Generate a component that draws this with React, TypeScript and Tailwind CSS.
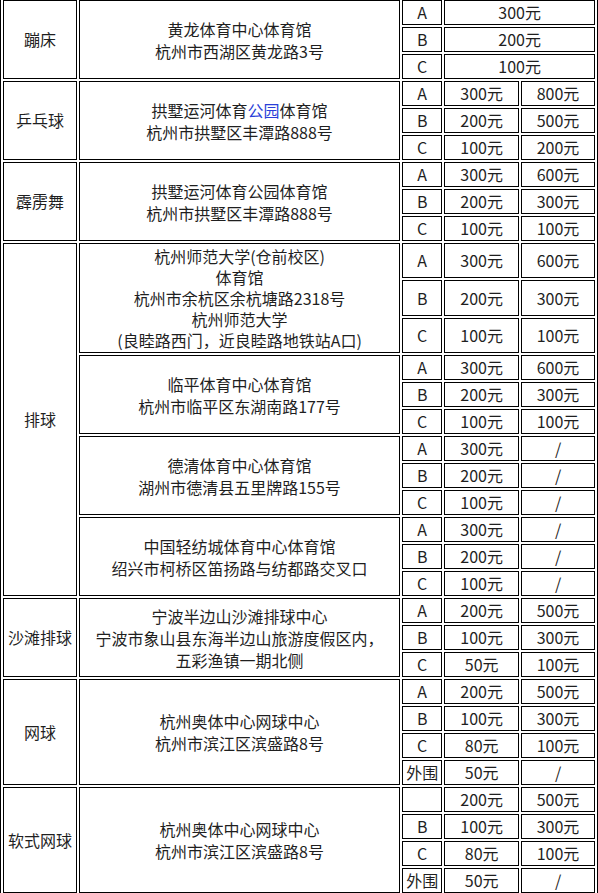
import React from 'react';

type PriceRow = {
  level: string;
  price: string;
  price2?: string;
  h?: string;
};

type Venue = {
  place: React.ReactNode;
  tight?: boolean;
  rows: PriceRow[];
};

type Sport = {
  name: string;
  venues: Venue[];
};

const abc = (a: [string, string?], b: [string, string?], c: [string, string?]): PriceRow[] => [
  { level: 'A', price: a[0], price2: a[1] },
  { level: 'B', price: b[0], price2: b[1] },
  { level: 'C', price: c[0], price2: c[1] },
];

const sports: Sport[] = [
  {
    name: '蹦床',
    venues: [
      {
        place: (
          <>
            黄龙体育中心体育馆
            <br />
            杭州市西湖区黄龙路3号
          </>
        ),
        rows: abc(['300元'], ['200元'], ['100元']),
      },
    ],
  },
  {
    name: '乒乓球',
    venues: [
      {
        place: (
          <>
            拱墅运河体育<span className="text-[#2a3fd8]">公园</span>体育馆
            <br />
            杭州市拱墅区丰潭路888号
          </>
        ),
        rows: abc(['300元', '800元'], ['200元', '500元'], ['100元', '200元']),
      },
    ],
  },
  {
    name: '霹雳舞',
    venues: [
      {
        place: (
          <>
            拱墅运河体育公园体育馆
            <br />
            杭州市拱墅区丰潭路888号
          </>
        ),
        rows: abc(['300元', '600元'], ['200元', '300元'], ['100元', '100元']),
      },
    ],
  },
  {
    name: '排球',
    venues: [
      {
        place: (
          <>
            杭州师范大学(仓前校区)
            <br />
            体育馆
            <br />
            杭州市余杭区余杭塘路2318号
            <br />
            杭州师范大学
            <br />
            (良睦路西门，近良睦路地铁站A口)
          </>
        ),
        tight: true,
        rows: [
          { level: 'A', price: '300元', price2: '600元', h: 'h-[35px]' },
          { level: 'B', price: '200元', price2: '300元', h: 'h-[36px]' },
          { level: 'C', price: '100元', price2: '100元', h: 'h-[35px]' },
        ],
      },
      {
        place: (
          <>
            临平体育中心体育馆
            <br />
            杭州市临平区东湖南路177号
          </>
        ),
        rows: abc(['300元', '600元'], ['200元', '300元'], ['100元', '100元']),
      },
      {
        place: (
          <>
            德清体育中心体育馆
            <br />
            湖州市德清县五里牌路155号
          </>
        ),
        rows: abc(['300元', '/'], ['200元', '/'], ['100元', '/']),
      },
      {
        place: (
          <>
            中国轻纺城体育中心体育馆
            <br />
            绍兴市柯桥区笛扬路与纺都路交叉口
          </>
        ),
        rows: abc(['300元', '/'], ['200元', '/'], ['100元', '/']),
      },
    ],
  },
  {
    name: '沙滩排球',
    venues: [
      {
        place: (
          <>
            宁波半边山沙滩排球中心
            <br />
            宁波市象山县东海半边山旅游度假区内，
            <br />
            五彩渔镇一期北侧
          </>
        ),
        rows: abc(['200元', '500元'], ['100元', '300元'], ['50元', '100元']),
      },
    ],
  },
  {
    name: '网球',
    venues: [
      {
        place: (
          <>
            杭州奥体中心网球中心
            <br />
            杭州市滨江区滨盛路8号
          </>
        ),
        rows: [
          ...abc(['200元', '500元'], ['100元', '300元'], ['80元', '100元']),
          { level: '外围', price: '50元', price2: '/' },
        ],
      },
    ],
  },
  {
    name: '软式网球',
    venues: [
      {
        place: (
          <>
            杭州奥体中心网球中心
            <br />
            杭州市滨江区滨盛路8号
          </>
        ),
        rows: [
          { level: '', price: '200元', price2: '500元' },
          { level: 'B', price: '100元', price2: '300元' },
          { level: 'C', price: '80元', price2: '100元' },
          { level: '外围', price: '50元', price2: '/' },
        ],
      },
    ],
  },
];

const cell = 'border border-black p-px text-center align-middle';

export default function App() {
  return (
    <div
      className="w-[598px] overflow-hidden bg-white text-[16px] leading-[21px] text-[#1f1f1f]"
      style={{ fontFamily: '"Microsoft YaHei", "Noto Sans CJK SC", "Noto Sans", sans-serif' }}
    >
      <table className="-mt-[3px] table-fixed border-separate border-spacing-[2px] border border-black">
        <colgroup>
          <col className="w-[74px]" />
          <col className="w-[322px]" />
          <col className="w-[40px]" />
          <col className="w-[75px]" />
          <col className="w-[74px]" />
        </colgroup>
        <tbody>
          {sports.map((sport) => {
            const total = sport.venues.reduce((n, v) => n + v.rows.length, 0);
            return sport.venues.map((venue, vi) =>
              venue.rows.map((row, ri) => (
                <tr key={`${sport.name}-${vi}-${ri}`} className={row.h ?? 'h-[25px]'}>
                  {vi === 0 && ri === 0 && (
                    <td rowSpan={total} className={cell}>
                      {sport.name}
                    </td>
                  )}
                  {ri === 0 && (
                    <td
                      rowSpan={venue.rows.length}
                      className={`${cell} ${venue.tight ? 'leading-[21px]' : 'leading-[22px]'}`}
                    >
                      {venue.place}
                    </td>
                  )}
                  <td className={cell}>{row.level}</td>
                  {row.price2 === undefined ? (
                    <td colSpan={2} className={cell}>
                      {row.price}
                    </td>
                  ) : (
                    <>
                      <td className={cell}>{row.price}</td>
                      <td className={cell}>{row.price2}</td>
                    </>
                  )}
                </tr>
              ))
            );
          })}
        </tbody>
      </table>
    </div>
  );
}
